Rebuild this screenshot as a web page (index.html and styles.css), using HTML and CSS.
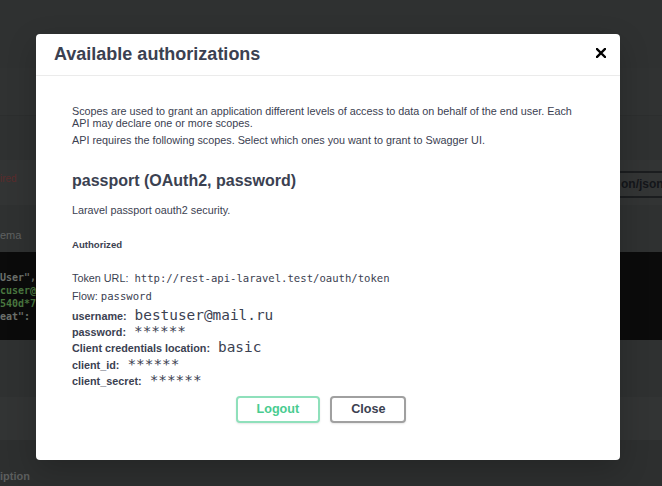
FILE: index.html
```html
<!DOCTYPE html>
<html>
<head>
<meta charset="utf-8">
<link rel="stylesheet" href="styles.css">
</head>
<body>
<div class="page">
  <div class="band b1"></div>
  <div class="band b2"></div>
  <div class="band b3"></div>
  <div class="band b4"><span class="req">ired</span><div class="select">on/json</div></div>
  <div class="band b5"><span class="schema">ema</span></div>
  <div class="code">
    <div class="cl key">User",</div>
    <div class="cl str">cuser@</div>
    <div class="cl str">540d*7</div>
    <div class="cl key">eat":</div>
  </div>
  <div class="band b6"></div>
  <div class="band b7"></div>
  <div class="band b8"><span class="desc">iption</span></div>
</div>

<div class="modal">
  <div class="modal-header">
    <h3 class="title">Available authorizations</h3>
    <button class="close-btn" aria-label="Close">
      <svg width="10" height="10" viewBox="0 0 10 10"><path d="M1 1 L9 9 M9 1 L1 9" stroke="#000" stroke-width="2.4" stroke-linecap="square" fill="none"/></svg>
    </button>
  </div>
  <div class="modal-content">
    <p class="txt p1">Scopes are used to grant an application different levels of access to data on behalf of the end user. Each API may declare one or more scopes.</p>
    <p class="txt p2">API requires the following scopes. Select which ones you want to grant to Swagger UI.</p>
    <h4 class="scheme">passport (OAuth2, password)</h4>
    <p class="txt p3">Laravel passport oauth2 security.</p>
    <h6 class="authorized">Authorized</h6>
    <p class="txt url">Token URL: <code class="mono url-code">http://rest-api-laravel.test/oauth/token</code></p>
    <p class="txt flow">Flow: <code class="mono">password</code></p>
    <div class="row first"><label class="lbl">username:</label><code class="val">bestuser@mail.ru</code></div>
    <div class="row"><label class="lbl">password:</label><code class="val">******</code></div>
    <div class="row"><label class="lbl">Client credentials location:</label><code class="val">basic</code></div>
    <div class="row r-id"><label class="lbl">client_id:</label><code class="val">******</code></div>
    <div class="row"><label class="lbl">client_secret:</label><code class="val">******</code></div>
    <div class="btns">
      <button class="btn logout">Logout</button>
      <button class="btn close">Close</button>
    </div>
  </div>
</div>
</body>
</html>
```

FILE: styles.css
```css
html, body {
  margin: 0;
  padding: 0;
  width: 662px;
  height: 486px;
  overflow: hidden;
  background: #2f3131;
  font-family: "Liberation Sans", Arial, sans-serif;
}

.page {
  width: 662px;
  overflow: hidden;
}

.band {
  display: flex;
  align-items: center;
  box-sizing: border-box;
}

.b1 { height: 68px; background: #2f3131; }
.b2 { height: 47px; background: #303232; }
.b3 { height: 45px; background: #2f3131; border-top: 1px solid #2c2e2e; }
.b4 { height: 45px; background: #323434; justify-content: space-between; }
.b5 { height: 47px; background: #2f3131; }
.b6 { height: 57px; background: #2f3131; }
.b7 { height: 43px; background: #323434; }
.b8 { height: 46px; background: #2d2f2f; }

.req {
  font-size: 10px;
  color: #5a2c2c;
  margin-top: -8px;
}

.select {
  width: 64px;
  height: 27px;
  box-sizing: border-box;
  border-top: 2px solid #1b1d1f;
  border-bottom: 2px solid #1b1d1f;
  background: #333535;
  font-size: 12px;
  font-weight: bold;
  color: #14161a;
  line-height: 23px;
  padding-left: 19px;
  margin-right: -4px;
  margin-top: 4px;
  white-space: nowrap;
  overflow: hidden;
}

.schema {
  font-size: 11px;
  color: #5f6161;
  margin-top: 12px;
}

.code {
  height: 88px;
  background: #0b0b0b;
  box-sizing: border-box;
  padding-top: 19px;
}

.cl {
  font-family: "DejaVu Sans Mono", monospace;
  font-size: 10px;
  font-weight: bold;
  line-height: 13px;
  white-space: pre;
}

.key { color: #6c716c; }
.str { color: #4a7840; }

.desc {
  font-size: 11px;
  font-weight: bold;
  color: #5c5e5e;
  margin-top: 26px;
}

/* modal */
.modal {
  position: absolute;
  left: 36px;
  top: 34px;
  width: 584px;
  height: 426px;
  background: #fff;
  border-radius: 4px;
  box-shadow: 0 10px 30px rgba(0, 0, 0, 0.2);
  color: #3b4151;
  overflow: hidden;
}

.modal-header {
  display: flex;
  align-items: center;
  justify-content: space-between;
  padding: 9px 14px 10px 18px;
  border-bottom: 1px solid #ebebeb;
}

.title {
  margin: 0;
  font-size: 18px;
  font-weight: bold;
  line-height: 22px;
  color: #3b4151;
}

.close-btn {
  border: 0;
  background: none;
  padding: 0;
  width: 10px;
  height: 10px;
  display: flex;
  margin-top: -2px;
}

.modal-content {
  padding: 29px 36px 0 36px;
}

.txt {
  margin: 0;
  font-size: 10.8px;
  line-height: 12px;
  color: #3b4151;
}

.p2 { margin-top: 5px; }

.scheme {
  margin: 25px 0 0 0;
  font-size: 16px;
  font-weight: bold;
  line-height: 20px;
}

.p3 { margin-top: 13px; }

.authorized {
  margin: 23px 0 0 0;
  font-size: 9.6px;
  font-weight: bold;
  line-height: 12px;
}

.url {
  margin-top: 20px;
  line-height: 14px;
}

.flow {
  margin-top: 4px;
  line-height: 14px;
}

.mono {
  font-family: "DejaVu Sans Mono", monospace;
  font-size: 10.6px;
  color: #3b4151;
}

.url-code { margin-left: 3px; }

.row {
  display: flex;
  align-items: baseline;
  gap: 8px;
  height: 16px;
  line-height: 16px;
}

.row.first { margin-top: 4px; }
.row.r-id { margin-top: 1px; }

.lbl {
  font-size: 10.8px;
  font-weight: bold;
  color: #3b4151;
}

.val {
  font-family: "DejaVu Sans Mono", monospace;
  font-size: 14.4px;
  color: #3b4151;
}

.btns {
  display: flex;
  justify-content: center;
  gap: 10px;
  margin-top: 8px;
  padding-right: 14px;
}

.btn {
  height: 27px;
  box-sizing: border-box;
  padding: 0 19px;
  border-radius: 4px;
  background: #fff;
  font-family: "Liberation Sans", Arial, sans-serif;
  font-size: 12.6px;
  font-weight: bold;
  line-height: 23px;
  box-shadow: 0 1px 2px rgba(0, 0, 0, 0.1);
}

.logout {
  border: 2px solid #8fe0bb;
  color: #49cc90;
}

.close {
  border: 2px solid #a0a0a0;
  color: #3b4151;
}
```
